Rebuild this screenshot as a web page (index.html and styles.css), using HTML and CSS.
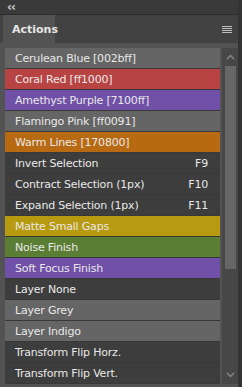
FILE: index.html
```html
<!DOCTYPE html>
<html>
<head>
	<title>Actions</title>
	<link rel="stylesheet" href="styles.css">
</head>
<body>
	<div class="panel">
		<div class="topbar"><span class="collapse">&lsaquo;&lsaquo;</span></div>
		<div class="tabrow">
			<div class="tab">Actions</div>
			<div class="menu"><span></span><span></span><span></span><span></span></div>
		</div>
		<div class="body">
			<ul class="list">
				<li class="grey">Cerulean Blue [002bff]</li>
				<li class="red">Coral Red [ff1000]</li>
				<li class="violet">Amethyst Purple [7100ff]</li>
				<li class="grey">Flamingo Pink [ff0091]</li>
				<li class="orange">Warm Lines [170800]</li>
				<li class="none">Invert Selection <span class="key">F9</span></li>
				<li class="none">Contract Selection (1px) <span class="key">F10</span></li>
				<li class="none">Expand Selection (1px) <span class="key">F11</span></li>
				<li class="yellow">Matte Small Gaps</li>
				<li class="green">Noise Finish</li>
				<li class="violet">Soft Focus Finish</li>
				<li class="none">Layer None</li>
				<li class="grey">Layer Grey</li>
				<li class="grey">Layer Indigo</li>
				<li class="none">Transform Flip Horz.</li>
				<li class="none">Transform Flip Vert.</li>
			</ul>
			<div class="scroll">
				<svg class="arrow" width="9" height="6" viewBox="0 0 9 6"><path d="M1 5 L4.5 1.5 L8 5" fill="none" stroke="#8a8a8a" stroke-width="1.3"/></svg>
				<div class="thumb"></div>
				<div class="track"></div>
				<svg class="arrow" width="9" height="6" viewBox="0 0 9 6"><path d="M1 1 L4.5 4.5 L8 1" fill="none" stroke="#8a8a8a" stroke-width="1.3"/></svg>
			</div>
		</div>
	</div>
</body>
</html>
```
FILE: styles.css
```css
/* panel frame */
body {
  margin: 0;
  background-color: #2b2b2b;
  font-family: "DejaVu Sans", sans-serif;
}

.panel {
  width: 238px;
  height: 387px;
  background-color: #535353;
  border-right: 4px solid #333333;
  display: flex;
  flex-direction: column;
}

.topbar {
  height: 14px;
  background-color: #3a3a3a;
  border-bottom: 1px solid #2c2c2c;
  display: flex;
  align-items: center;
  padding-left: 7px;
}

.collapse {
  color: #d0d0d0;
  font-size: 12px;
  font-weight: bold;
  letter-spacing: -1px;
  line-height: 12px;
}

/* tab row */
.tabrow {
  height: 28px;
  background-color: #424242;
  display: flex;
  align-items: stretch;
  padding-left: 3px;
}

.tab {
  width: 52px;
  background-color: #535353;
  color: #e6e6e6;
  font-weight: bold;
  font-size: 11px;
  padding-left: 9px;
  box-sizing: border-box;
  display: flex;
  align-items: center;
}

.menu {
  margin-left: auto;
  margin-right: 6px;
  display: flex;
  flex-direction: column;
  justify-content: center;
  gap: 1px;
}

.menu span {
  display: block;
  width: 10px;
  height: 1px;
  background-color: #bdbdbd;
}

/* list */
.body {
  flex: 1;
  display: flex;
  padding: 5px 0 3px 5px;
  min-height: 0;
}

.list {
  list-style: none;
  margin: 0;
  padding: 0;
  width: 215px;
}

.list li {
  height: 20px;
  border-bottom: 1px solid #383838;
  display: flex;
  align-items: center;
  padding: 0 12px 0 10px;
  color: #e8e8e8;
  font-size: 11px;
  letter-spacing: -0.2px;
}

.key {
  margin-left: auto;
}

.grey { background-color: #656565; }
.red { background-color: #b84343; }
.violet { background-color: #7150a8; }
.orange { background-color: #b86a12; }
.none { background-color: #3d3d3d; }
.yellow { background-color: #b89a10; }
.green { background-color: #5b7e35; }

/* scrollbar */
.scroll {
  width: 16px;
  margin-left: 2px;
  background-color: #474747;
  display: flex;
  flex-direction: column;
  align-items: center;
}

.arrow {
  margin: 6px 0;
}

.thumb {
  width: 11px;
  height: 203px;
  background-color: #666666;
}

.track {
  flex: 1;
}
```
